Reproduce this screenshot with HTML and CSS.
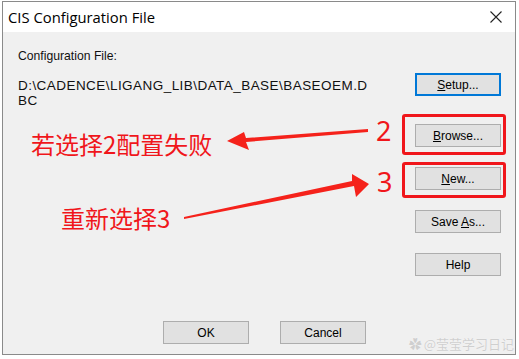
FILE: index.html
```
<!DOCTYPE html>
<html lang="zh">
<head>
    <meta charset="UTF-8">
    <title>CIS Configuration File</title>
    <link rel="stylesheet" href="styles.css">
</head>
<body>
    <div class="dialog">
        <div class="titlebar">
            <span class="title">CIS Configuration File</span>
            <svg class="close" width="12" height="12" viewBox="0 0 12 12">
                <path d="M0.5 0.5 L11.5 11.5 M11.5 0.5 L0.5 11.5" stroke="#222" stroke-width="1.1" fill="none"/>
            </svg>
        </div>
        <div class="content">
            <div class="main">
                <div class="info">
                    <div class="label">Configuration File:</div>
                    <div class="path">D:\CADENCE\LIGANG_LIB\DATA_BASE\BASEOEM.D<br>BC</div>
                </div>
                <div class="side">
                    <button class="btn default"><u>S</u>etup...</button>
                    <button class="btn first"><u>B</u>rowse...</button>
                    <button class="btn"><u>N</u>ew...</button>
                    <button class="btn">Save <u>A</u>s...</button>
                    <button class="btn">Help</button>
                </div>
            </div>
            <div class="footer">
                <button class="btn">OK</button>
                <button class="btn">Cancel</button>
            </div>
        </div>

        <!-- anotaciones en rojo sobre la captura -->
        <div class="box box-browse"></div>
        <div class="box box-new"></div>
        <div class="num num-2">2</div>
        <div class="num num-3">3</div>
        <div class="note note-1">若选择2配置失败</div>
        <div class="note note-2">重新选择3</div>
        <svg class="arrows" width="519" height="359" viewBox="0 0 519 359">
            <polygon fill="#f5221b" points="368,129 368,132 246,142 249,150 227,141 244,132 246,138"/>
            <polygon fill="#f5221b" points="184,219 184,217 352,181 352,174 369,184 356,197 354,186"/>
        </svg>
        <div class="watermark"><span class="logo">✿</span>@莹莹学习日记</div>
    </div>
</body>
</html>
```

FILE: styles.css
```
body {
    margin: 0;
    padding: 1px 3px 2px 2px;
    background: #ffffff;
    font-family: "Liberation Sans", Arial, sans-serif;
}

.dialog {
    position: relative;
    height: 354px;
    border: 1px solid #8a8a8a;
    background: #f0f0f0;
    display: flex;
    flex-direction: column;
    box-sizing: border-box;
}

.titlebar {
    height: 30px;
    background: #ffffff;
    display: flex;
    align-items: center;
    justify-content: space-between;
    padding: 0 13px 0 5px;
}

.title {
    font-family: "Open Sans", "Noto Sans", sans-serif;
    font-size: 14.8px;
    color: #000;
    margin-top: -1px;
}

.content {
    flex: 1;
    display: flex;
    flex-direction: column;
    padding: 0 14px 10px 15px;
}

.main {
    display: flex;
    justify-content: space-between;
}

.info {
    padding-top: 17px;
    font-size: 12.2px;
    line-height: 15px;
    color: #111;
}

.path {
    margin-top: 14px;
    font-size: 13.5px;
    letter-spacing: 0.45px;
}

.side {
    display: flex;
    flex-direction: column;
    gap: 20px;
    padding-top: 41px;
}

.btn {
    width: 86px;
    height: 23px;
    background: #e1e1e1;
    border: 1px solid #adadad;
    font-family: "Liberation Sans", Arial, sans-serif;
    font-size: 12px;
    color: #000;
    padding: 0;
}

.btn.default {
    border: 2px solid #0078d7;
}

.btn.first {
    margin-top: 8px;
}

.footer {
    margin-top: auto;
    display: flex;
    gap: 31px;
    padding-left: 145px;
}

.box {
    position: absolute;
    border: 3px solid #f0161b;
    border-radius: 3px;
}

.box-browse {
    left: 399px;
    top: 112px;
    width: 98px;
    height: 35px;
}

.box-new {
    left: 399px;
    top: 160px;
    width: 98px;
    height: 30px;
}

.num {
    position: absolute;
    font-family: "Noto Sans", sans-serif;
    font-size: 27px;
    line-height: 30px;
    color: #f0161b;
}

.num-2 {
    left: 373px;
    top: 114px;
}

.num-3 {
    left: 374px;
    top: 165px;
}

.note {
    position: absolute;
    font-family: "Noto Sans CJK SC", sans-serif;
    font-size: 24px;
    line-height: 30px;
    color: #f0161b;
}

.note-1 {
    left: 28px;
    top: 127px;
}

.note-2 {
    left: 58px;
    top: 201px;
}

.arrows {
    position: absolute;
    left: -3px;
    top: -2px;
}

.watermark {
    position: absolute;
    right: 1px;
    bottom: 3px;
    font-family: "Noto Sans CJK SC", sans-serif;
    font-size: 13px;
    line-height: 15px;
    color: #cfcfcf;
    text-shadow: 0 0 1px #ffffff;
}

.logo {
    margin-right: 2px;
}
```
